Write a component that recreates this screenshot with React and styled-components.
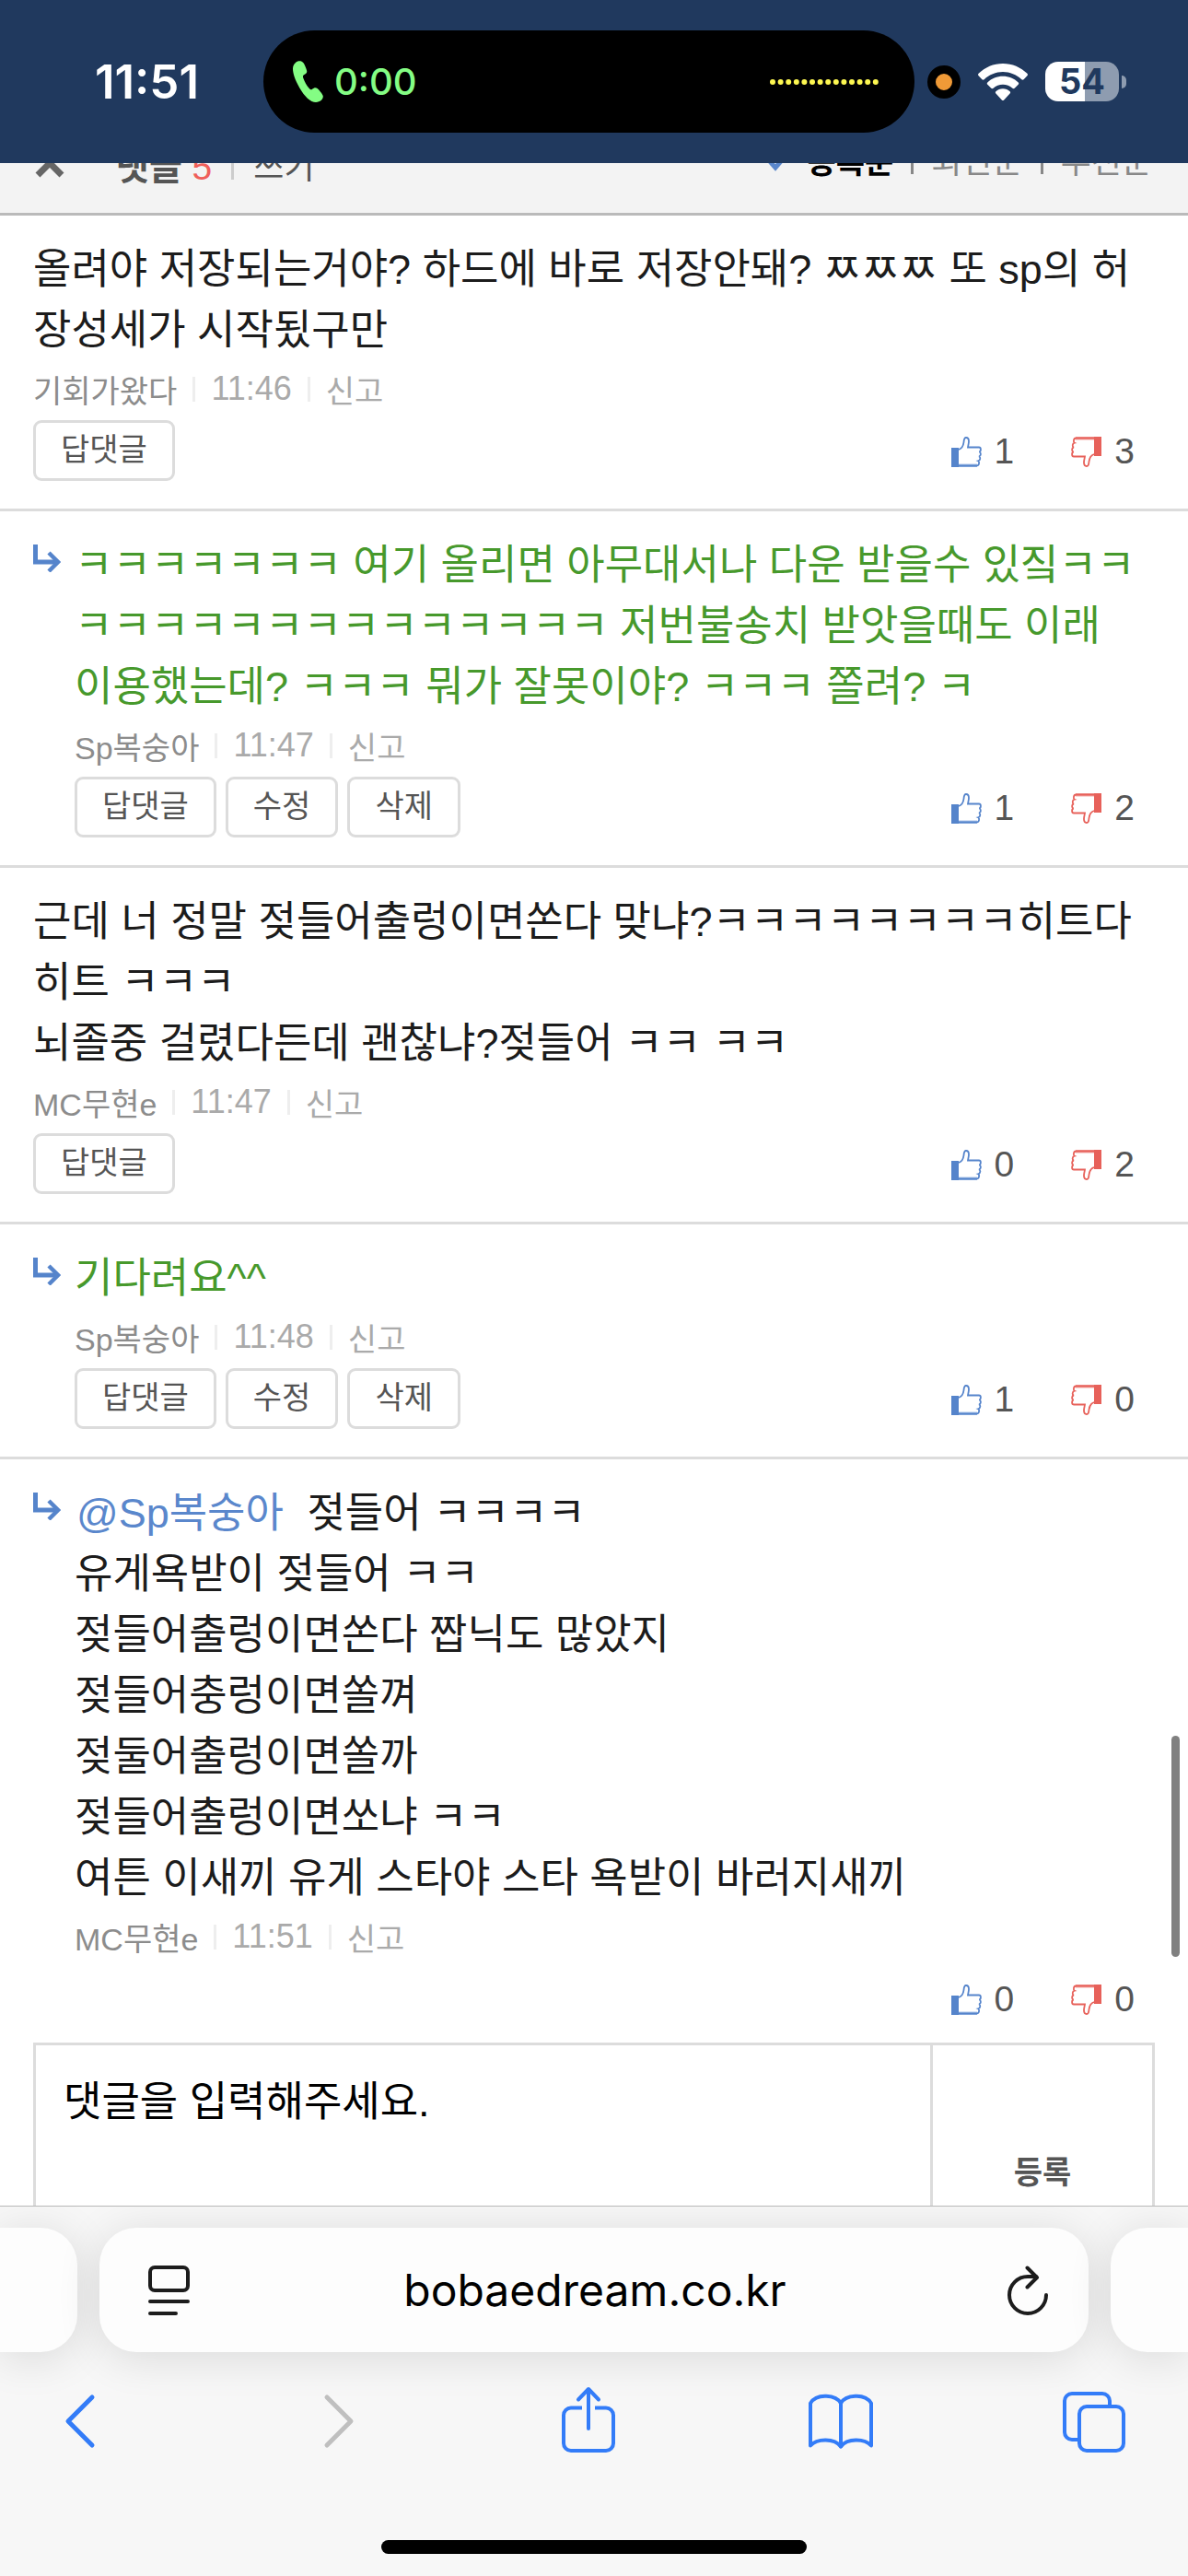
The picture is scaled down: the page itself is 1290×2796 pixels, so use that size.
import styled, { createGlobalStyle } from "styled-components";

const GlobalStyle = createGlobalStyle`
  * {
    box-sizing: border-box;
  }

  body {
    margin: 0;
    background: #ffffff;
    color: #1c1c1c;
    font-family: "Liberation Sans", "Noto Sans CJK KR", sans-serif;
  }

  button, textarea {
    margin: 0;
    padding: 0;
    border: 0;
    background: none;
    color: inherit;
    font: inherit;
  }

  a {
    color: inherit;
    text-decoration: none;
  }

  svg {
    display: block;
  }
`;

const Screen = styled.div`
  display: flex;
  flex-direction: column;
  height: 100vh;
  overflow: hidden;
`;

/* ---------- status bar ---------- */

const StatusBar = styled.header`
  position: relative;
  z-index: 1;
  display: grid;
  grid-template-columns: 286px 1fr 297px;
  align-items: center;
  flex: none;
  height: 177px;
  background: #20395e;
  font-family: "Inter", sans-serif;
`;

const Clock = styled.div`
  padding-right: 70px;
  color: #ffffff;
  font-size: 51px;
  font-weight: 600;
  line-height: 60px;
  text-align: right;
`;

const Island = styled.div`
  display: flex;
  align-items: center;
  justify-content: space-between;
  height: 111px;
  padding: 0 39px 0 32px;
  border-radius: 56px;
  background: #000000;
`;

const Call = styled.div`
  display: flex;
  align-items: center;
  gap: 12px;
  color: #84fd84;
  font-size: 40px;
  font-weight: 500;
  line-height: 48px;
`;

const StatusIcons = styled.div`
  display: flex;
  align-items: center;
  padding-left: 14px;
  gap: 19px;
`;

const MicDot = styled.div`
  width: 36px;
  height: 36px;
  border: 9px solid #000000;
  border-radius: 50%;
  background: #f09a37;
`;

const Battery = styled.div`
  display: flex;
  align-items: center;
  gap: 3px;
`;

const BatteryBody = styled.div`
  width: 80px;
  height: 43px;
  border-radius: 14px;
  background: linear-gradient(to right, #ffffff 54%, #8e9cb0 54%);
  color: #20395e;
  font-size: 38px;
  font-weight: 700;
  line-height: 43px;
  text-align: center;
`;

const BatteryTip = styled.div`
  width: 5px;
  height: 14px;
  border-radius: 0 7px 7px 0;
  background: #8e9cb0;
`;

/* ---------- comment list ---------- */

const Page = styled.main`
  position: relative;
  flex: 1;
  min-height: 0;
  overflow: hidden;
`;

/* scrolled up, so its upper half is under the status bar */
const ListHeader = styled.div`
  display: flex;
  align-items: center;
  justify-content: space-between;
  height: 108px;
  margin-top: -51px;
  padding: 0 39px 0 36px;
  border-bottom: 3px solid #bababa;
  background: #f3f3f3;
`;

const HeaderGroup = styled.div`
  display: flex;
  align-items: center;
  gap: 21px;
  padding-top: 6px;
  color: #555555;
  font-size: 36px;
  line-height: 48px;
`;

const SortGroup = styled(HeaderGroup)`
  gap: 19px;
  padding: 0 0 6px;
  color: #888888;
`;

const CloseButton = styled.button`
  padding-bottom: 6px;
`;

const HeaderCount = styled.strong`
  padding-left: 33px;
  font-size: 39px;

  & span {
    color: #ef5f5a;
    font-weight: 400;
  }
`;

const CurrentSort = styled.a`
  display: flex;
  align-items: center;
  gap: 20px;
  color: #000000;
  font-size: 34px;
  font-weight: 700;
`;

const Separator = styled.span`
  width: 3px;
  height: 27px;
  background: ${(props) => props.$color || "#eeeeee"};
`;

const CommentItem = styled.article`
  display: flex;
  gap: 15px;
  padding: 26px 36px ${(props) => (props.$last ? "15px" : "30px")};
  border-bottom: ${(props) => (props.$last ? "0" : "3px solid #dcdcdc")};
`;

const ReplyMark = styled.svg`
  flex: none;
  width: 30px;
  height: 30px;
  margin-top: 10px;
`;

const CommentBody = styled.div`
  flex: 1;
  min-width: 0;
`;

const CommentText = styled.p`
  margin: 0;
  color: ${(props) => (props.$mine ? "#47992c" : "#1c1c1c")};
  font-size: 45px;
  line-height: 66px;
`;

const Line = styled.span`
  display: block;
`;

const Mention = styled.a`
  margin: 0 13px 0 2px;
  color: #5a87cc;
`;

const Meta = styled.div`
  display: flex;
  align-items: center;
  gap: 17px;
  height: 64px;
  padding-bottom: 4px;
  color: #aaaaaa;
  font-size: 34px;
`;

const Author = styled.span`
  color: #8c8c8c;
`;

const Time = styled.time`
  font-size: 36px;
`;

const Actions = styled.div`
  display: flex;
  align-items: center;
  gap: 10px;
  height: 66px;
`;

const ActionButton = styled.button`
  height: 66px;
  padding: 0 27px 3px;
  border: 3px solid #dcdcdc;
  border-radius: 9px;
  background: #ffffff;
  color: #555555;
  font-size: 34px;
  line-height: 48px;
`;

const Votes = styled.div`
  display: flex;
  gap: 62px;
  margin-left: auto;
  padding: 2px 22px 0 0;
`;

const VoteButton = styled.button`
  display: flex;
  align-items: center;
  gap: 14px;
  color: #555555;
  font-size: 39px;
  line-height: 48px;

  & svg {
    width: 33px;
    height: 33px;
  }
`;

const ScrollThumb = styled.div`
  position: absolute;
  top: 77%;
  right: 9px;
  width: 9px;
  height: 240px;
  border-radius: 5px;
  background: #808080;
`;

/* ---------- comment form ---------- */

const CommentForm = styled.form`
  display: flex;
  height: 276px;
  margin: 0 36px;
  border: 3px solid #dcdcdc;
`;

const CommentInput = styled.textarea`
  flex: 1;
  padding: 29px 30px;
  outline: 0;
  font-size: 45px;
  line-height: 66px;
  resize: none;

  &::placeholder {
    color: #000000;
    opacity: 1;
  }
`;

const SubmitButton = styled.button`
  width: 241px;
  border-left: 3px solid #dcdcdc;
  color: #555555;
  font-size: 34px;
  font-weight: 700;
`;

/* ---------- browser bar ---------- */

const BrowserBar = styled.footer`
  position: relative;
  display: flex;
  flex-direction: column;
  flex: none;
  padding: 23px 0 24px;
  overflow: hidden;
  border-top: 1px solid #b8b8b8;
  background: #f7f7f7;
`;

const TabStrip = styled.div`
  display: flex;
  gap: 24px;
  height: 135px;
`;

const SideTab = styled.div`
  width: 84px;
  border-radius: ${(props) => (props.$right ? "40px 0 0 40px" : "0 40px 40px 0")};
  background: #fdfdfd;
  box-shadow: 0 6px 48px rgba(0, 0, 0, 0.12);
`;

const AddressBar = styled.div`
  display: flex;
  align-items: center;
  flex: 1;
  padding: 0 44px 0 53px;
  border-radius: 40px;
  background: #fdfdfd;
  box-shadow: 0 6px 48px rgba(0, 0, 0, 0.12);
`;

const Address = styled.button`
  flex: 1;
  padding-right: 8px;
  color: #000000;
  font-family: "Inter", sans-serif;
  font-size: 48px;
  line-height: 60px;
`;

const Toolbar = styled.nav`
  display: flex;
  justify-content: space-between;
  margin-top: 37px;
  padding: 0 66px 0 51px;
`;

const ToolButton = styled.button`
  width: 72px;
  height: 72px;
  color: ${(props) => (props.$off ? "#bfbfbf" : "#337cf8")};
`;

const HomeIndicator = styled.div`
  align-self: center;
  width: 462px;
  height: 15px;
  margin-top: 95px;
  border-radius: 8px;
  background: #000000;
`;

const comments = [
  {
    id: 1,
    author: "기회가왔다",
    time: "11:46",
    lines: ["올려야 저장되는거야? 하드에 바로 저장안돼? ㅉㅉㅉ 또 sp의 허", "장성세가 시작됬구만"],
    up: 1,
    down: 3,
    actions: ["답댓글"],
  },
  {
    id: 2,
    reply: true,
    mine: true,
    author: "Sp복숭아",
    time: "11:47",
    lines: [
      "ㅋㅋㅋㅋㅋㅋㅋ 여기 올리면 아무대서나 다운 받을수 있짘ㅋㅋ",
      "ㅋㅋㅋㅋㅋㅋㅋㅋㅋㅋㅋㅋㅋㅋ 저번불송치 받앗을때도 이래",
      "이용했는데? ㅋㅋㅋ 뭐가 잘못이야? ㅋㅋㅋ 쫄려? ㅋ",
    ],
    up: 1,
    down: 2,
    actions: ["답댓글", "수정", "삭제"],
  },
  {
    id: 3,
    author: "MC무현e",
    time: "11:47",
    lines: [
      "근데 너 정말 젖들어출렁이면쏜다 맞냐?ㅋㅋㅋㅋㅋㅋㅋㅋ히트다",
      "히트 ㅋㅋㅋ",
      "뇌졸중 걸렸다든데 괜찮냐?젖들어 ㅋㅋ ㅋㅋ",
    ],
    up: 0,
    down: 2,
    actions: ["답댓글"],
  },
  {
    id: 4,
    reply: true,
    mine: true,
    author: "Sp복숭아",
    time: "11:48",
    lines: ["기다려요^^"],
    up: 1,
    down: 0,
    actions: ["답댓글", "수정", "삭제"],
  },
  {
    id: 5,
    reply: true,
    mention: "@Sp복숭아",
    author: "MC무현e",
    time: "11:51",
    lines: [
      "젖들어 ㅋㅋㅋㅋ",
      "유게욕받이 젖들어 ㅋㅋ",
      "젖들어출렁이면쏜다 짭닉도 많았지",
      "젖들어충렁이면쏠껴",
      "젖둘어출렁이면쏠까",
      "젖들어출렁이면쏘냐 ㅋㅋ",
      "여튼 이새끼 유게 스타야 스타 욕받이 바러지새끼",
    ],
    up: 0,
    down: 0,
    actions: [],
  },
];

const Thumb = ({ color, light, down }) => (
  <svg viewBox="0 0 33 33" fill="none" aria-hidden="true">
    <g transform={down ? "rotate(180 16.5 16.5)" : undefined}>
      <path d="M8 29.500h20V33H8z" fill={light} />
      <path
        d="M8 14c3-1 5-4 5.500-8 .2-3 .8-5 2.500-5s3 1.500 3 4-.8 4.500-1 6.500H30c2.500 0 2.500 4.500 .3 5 2.200.6 2.200 4.500-.3 5 2 .6 1.700 4.300-.8 4.800 1.600.8 1.200 5.200-1.500 5.200H8"
        stroke={color}
        strokeWidth="1.800"
      />
      <path d="M0 12h8v21H0z" fill={color} />
    </g>
  </svg>
);

const Comment = ({ comment, last }) => (
  <CommentItem $last={last}>
    {comment.reply && (
      <ReplyMark viewBox="0 0 30 30" fill="none" aria-hidden="true">
        <path d="M2.500 0v19H26" stroke="#5584cb" strokeWidth="5" />
        <path d="M17 9l10 10-10 10" stroke="#5584cb" strokeWidth="4.500" />
      </ReplyMark>
    )}
    <CommentBody>
      <CommentText $mine={comment.mine}>
        {comment.lines.map((line, i) => (
          <Line key={line}>
            {i === 0 && comment.mention && (
              <>
                <Mention href="#mention">{comment.mention}</Mention>{" "}
              </>
            )}
            {line}
          </Line>
        ))}
      </CommentText>
      <Meta>
        <Author>{comment.author}</Author>
        <Separator />
        <Time>{comment.time}</Time>
        <Separator />
        <a href="#report">신고</a>
      </Meta>
      <Actions>
        {comment.actions.map((label) => (
          <ActionButton key={label} type="button">
            {label}
          </ActionButton>
        ))}
        <Votes>
          <VoteButton type="button" aria-label={`추천 ${comment.up}`}>
            <Thumb color="#5584cb" light="#a9c2e8" />
            {comment.up}
          </VoteButton>
          <VoteButton type="button" aria-label={`반대 ${comment.down}`}>
            <Thumb color="#e7615a" light="#f3a9a4" down />
            {comment.down}
          </VoteButton>
        </Votes>
      </Actions>
    </CommentBody>
  </CommentItem>
);

const PhoneIcon = () => (
  <svg width="33" height="45" viewBox="0 0 33 45" fill="currentColor" aria-hidden="true">
    <path d="M3 2C5-.3 9.500-.6 11.500 2.300c1.600 2.600 3.200 6.200 3.700 8.700.3 2-1.200 3.300-3.200 4.200-1.200.6-1.300 1.800-.7 3.600 1.500 4.300 3.600 8 6.500 11.300 1.300 1.500 2.200 1.500 3.200.7 1.800-1.500 3.800-2.300 5.600-.8 2.200 1.900 4.400 4.700 5.900 7.400 1.400 2.900-2 7.600-7.500 7.600-5.800 0-12.500-6.500-17.800-15.800C2 20 0 13.500 0 8.500 0 5.500 1.200 3.700 3 2z" />
  </svg>
);

const CallWave = () => (
  <svg width="118" height="6" viewBox="0 0 118 6" fill="#fdf751" aria-hidden="true">
    {Array.from({ length: 14 }, (_, i) => (
      <circle key={i} cx={3 + i * 8.6} cy="3" r="3" />
    ))}
  </svg>
);

const WifiIcon = () => (
  <svg width="54" height="40" viewBox="0 0 54 40" fill="#ffffff" aria-hidden="true">
    <path d="M27 0c10 0 19.500 4 26.400 10.800.7.700.7 1.700 0 2.400l-3.800 4c-.6.600-1.600.600-2.300 0C41.700 12 34.600 9 27 9S12.300 12 6.700 17.200c-.7.600-1.700.600-2.300 0l-3.800-4c-.7-.7-.7-1.700 0-2.400C7.500 4 17 0 27 0z" />
    <path d="M27 13.800c6.400 0 12.300 2.500 16.700 6.600.7.700.7 1.700 0 2.400l-4 4c-.6.700-1.600.600-2.300 0A15.500 15.500 0 0 0 27 22.700c-4 0-7.600 1.500-10.400 4.100-.7.600-1.700.700-2.300 0l-4-4c-.7-.7-.7-1.700 0-2.400 4.400-4.100 10.300-6.600 16.700-6.600z" />
    <path d="M27 27.300c3 0 5.600 1.200 7.600 3 .7.700.7 1.600 0 2.300l-6.400 6.800c-.7.700-1.700.700-2.400 0l-6.400-6.800c-.7-.7-.7-1.600 0-2.300 2-1.800 4.600-3 7.600-3z" />
  </svg>
);

const strokeProps = {
  fill: "none",
  stroke: "currentColor",
  strokeWidth: 4,
  strokeLinecap: "round",
  strokeLinejoin: "round",
  "aria-hidden": true,
};

const tools = [
  { label: "뒤로", icon: <path d="M49 12L23 38l26 26" strokeWidth="5" /> },
  { label: "앞으로", off: true, icon: <path d="M29 12l26 26-26 26" strokeWidth="5" /> },
  {
    label: "공유",
    icon: (
      <>
        <path d="M30 23.500H18a8 8 0 0 0-8 8V62a8 8 0 0 0 8 8h38a8 8 0 0 0 8-8V31.500a8 8 0 0 0-8-8H44" strokeLinecap="butt" />
        <path d="M37 46V4M26 14.500L37 3l11 11.500" />
      </>
    ),
  },
  {
    label: "책갈피",
    icon: (
      <>
        <path d="M36 18.500C31 9.500 10 7 3 18.500v46c7-8 26-8.500 33 1 7-9.500 26-9 33-1v-46C62 7 41 9.500 36 18.500z" />
        <path d="M36 18.500v47" />
      </>
    ),
  },
  {
    label: "탭",
    icon: (
      <>
        <path d="M53 21v-5a8 8 0 0 0-8-8H12a8 8 0 0 0-8 8v34a8 8 0 0 0 8 8h6" strokeLinecap="butt" />
        <rect x="20" y="22" width="48" height="48" rx="8" />
      </>
    ),
  },
];

export const App = () => {
  return (
    <Screen>
      <GlobalStyle />

      <StatusBar>
        <Clock>11:51</Clock>
        <Island>
          <Call>
            <PhoneIcon />
            0:00
          </Call>
          <CallWave />
        </Island>
        <StatusIcons>
          <MicDot />
          <WifiIcon />
          <Battery>
            <BatteryBody>54</BatteryBody>
            <BatteryTip />
          </Battery>
        </StatusIcons>
      </StatusBar>

      <Page>
        <ListHeader>
          <HeaderGroup>
            <CloseButton type="button" aria-label="닫기">
              <svg width="36" height="36" viewBox="0 0 36 36" fill="none" stroke="#666666" strokeWidth="7">
                <path d="M5 3l26 26M31 3L5 29" />
              </svg>
            </CloseButton>
            <HeaderCount>
              댓글 <span>5</span>
            </HeaderCount>
            <Separator $color="#cccccc" />
            <a href="#write">쓰기</a>
          </HeaderGroup>
          <SortGroup>
            <CurrentSort href="#registered">
              <svg width="24" height="20" viewBox="0 0 24 20" fill="none" stroke="#5a87cc" strokeWidth="5">
                <path d="M2 7l8 9L22 2" />
              </svg>
              등록순
            </CurrentSort>
            <Separator $color="#888888" />
            <a href="#latest">최신순</a>
            <Separator $color="#888888" />
            <a href="#recommended">추천순</a>
          </SortGroup>
        </ListHeader>

        {comments.map((comment, i) => (
          <Comment key={comment.id} comment={comment} last={i === comments.length - 1} />
        ))}

        <CommentForm>
          <CommentInput aria-label="댓글" placeholder="댓글을 입력해주세요." />
          <SubmitButton type="button">등록</SubmitButton>
        </CommentForm>

        <ScrollThumb />
      </Page>

      <BrowserBar>
        <TabStrip>
          <SideTab />
          <AddressBar>
            <button type="button" aria-label="페이지 메뉴">
              <svg width="45" height="54" viewBox="0 0 45 54" {...strokeProps}>
                <rect x="2" y="2" width="41" height="25" rx="5" />
                <path d="M2 39h41M2 52h28" />
              </svg>
            </button>
            <Address type="button">bobaedream.co.kr</Address>
            <button type="button" aria-label="새로고침">
              <svg width="44" height="54" viewBox="0 0 44 54" {...strokeProps}>
                <path d="M42 32A20 20 0 1 1 22 12h9" />
                <path d="M21.500 2.500L32 13 21.500 23.500" />
              </svg>
            </button>
          </AddressBar>
          <SideTab $right />
        </TabStrip>
        <Toolbar>
          {tools.map((tool) => (
            <ToolButton key={tool.label} type="button" aria-label={tool.label} $off={tool.off}>
              <svg width="72" height="72" viewBox="0 0 72 72" {...strokeProps}>
                {tool.icon}
              </svg>
            </ToolButton>
          ))}
        </Toolbar>
        <HomeIndicator />
      </BrowserBar>
    </Screen>
  );
};

export default App;
